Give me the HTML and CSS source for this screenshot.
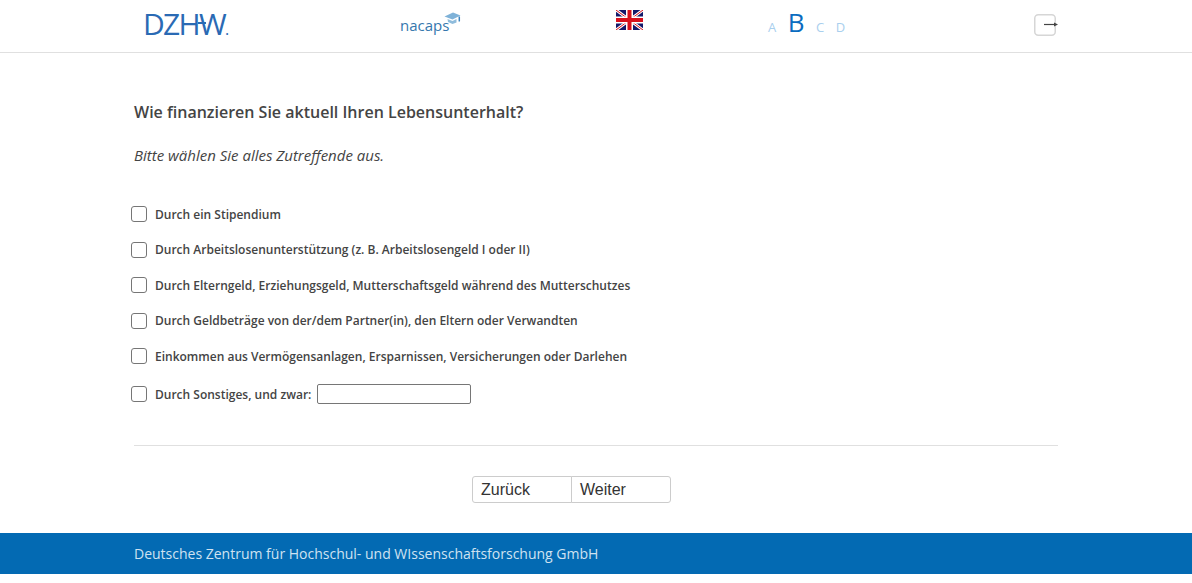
FILE: index.html
```html
<!DOCTYPE html>
<html lang="de">
<head>
    <meta charset="UTF-8">
    <meta name="viewport" content="width=device-width, initial-scale=1.0">
    <title>Wie finanzieren Sie aktuell Ihren Lebensunterhalt?</title>
    <link rel="stylesheet" href="styles.css">
</head>
<body>
    <header class="top-bar">
        <div class="top-inner">
            <div class="logo-dzhw">DZH<span class="logo-w">W</span><span class="logo-dot">.</span></div>
            <div class="logo-nacaps">
                <span>nacaps</span>
                <svg class="cap-icon" width="17" height="14" viewBox="0 0 17 14">
                    <path d="M0.500 4.500 9 0.500 16.500 3.500 8.500 7.500z" fill="#7fb2d8"/>
                    <path d="M3.500 7 8.500 9 12.500 7V10.500L8.500 12 4 10z" fill="#8fbcdc"/>
                    <path d="M15.300 4.500V9.500" stroke="#3f86c0" stroke-width="1.500"/>
                </svg>
            </div>
            <div class="flag-cell">
                <svg width="27" height="20" viewBox="0 0 27 20">
                    <rect width="27" height="20" fill="#14186a"/>
                    <path d="M0 0 27 20M27 0 0 20" stroke="#fff" stroke-width="3"/>
                    <path d="M0 0 27 20M27 0 0 20" stroke="#d8101c" stroke-width="1"/>
                    <path d="M13.500 0V20M0 10H27" stroke="#fff" stroke-width="7"/>
                    <path d="M13.500 0V20M0 10H27" stroke="#d8101c" stroke-width="4"/>
                </svg>
            </div>
            <div class="font-size-switch">
                <span>A</span>
                <span class="active">B</span>
                <span>C</span>
                <span>D</span>
            </div>
            <div class="logout-cell">
                <button class="logout" type="button" aria-label="Abmelden">
                    <svg width="22" height="22" viewBox="0 0 22 22">
                        <rect x="0.750" y="0.750" width="20.500" height="20.500" rx="3.500" fill="#fff" stroke="#d6d6d6" stroke-width="1.500"/>
                        <path d="M10 10.500H21" stroke="#444" stroke-width="1.200"/>
                        <path d="M20 8.500 24 10.500 20 12.500z" fill="#444"/>
                    </svg>
                </button>
            </div>
        </div>
    </header>

    <main class="content">
        <h1>Wie finanzieren Sie aktuell Ihren Lebensunterhalt?</h1>
        <p class="hint">Bitte wählen Sie alles Zutreffende aus.</p>

        <div class="options">
            <label class="option"><input type="checkbox"><span>Durch ein Stipendium</span></label>
            <label class="option"><input type="checkbox"><span>Durch Arbeitslosenunterstützung (z. B. Arbeitslosengeld I oder II)</span></label>
            <label class="option"><input type="checkbox"><span>Durch Elterngeld, Erziehungsgeld, Mutterschaftsgeld während des Mutterschutzes</span></label>
            <label class="option"><input type="checkbox"><span>Durch Geldbeträge von der/dem Partner(in), den Eltern oder Verwandten</span></label>
            <label class="option"><input type="checkbox"><span>Einkommen aus Vermögensanlagen, Ersparnissen, Versicherungen oder Darlehen</span></label>
            <label class="option option-other"><input type="checkbox"><span>Durch Sonstiges, und zwar:</span><input class="other-text" type="text"></label>
        </div>

        <hr class="divider">

        <div class="nav-buttons">
            <button type="button">Zurück</button>
            <button type="button">Weiter</button>
        </div>
    </main>

    <footer class="footer">
        <div class="footer-inner">Deutsches Zentrum für Hochschul- und WIssenschaftsforschung GmbH</div>
    </footer>
</body>
</html>
```

FILE: styles.css
```css
body {
    margin: 0;
    font-family: "Open Sans", Arial, sans-serif;
    color: #444;
    background-color: white;
}
.top-bar {
    height: 52px;
    border-bottom: 1px solid #e0e0e0;
}
.top-inner {
    width: 924px;
    margin: 0 auto;
    display: grid;
    grid-template-columns: 266px 216px 152px 266px 24px;
    height: 52px;
}
.logo-dzhw {
    padding: 8px 0 0 9px;
    font-size: 30px;
    line-height: 32px;
    font-weight: 400;
    letter-spacing: -1.7px;
    color: #2a6ab4;
}
.logo-w {
    position: relative;
}
.logo-w::before {
    content: "";
    position: absolute;
    left: -1px;
    top: 19px;
    width: 8px;
    height: 2px;
    background-color: #2a6ab4;
}
.logo-dot {
    font-size: 16px;
}
.logo-nacaps {
    display: flex;
    align-items: flex-start;
    padding-top: 15px;
    font-size: 15px;
    line-height: 20px;
    color: #3577ad;
}
.cap-icon {
    margin: -3px 0 0 -5px;
}
.flag-cell {
    padding-top: 10px;
}
.flag-cell svg {
    display: block;
}
.font-size-switch {
    display: flex;
    align-items: baseline;
    gap: 11.5px;
    height: 34px;
    padding-top: 6px;
    font-size: 13px;
    color: #a9cfee;
}
.font-size-switch .active {
    font-size: 26px;
    line-height: 32px;
    font-weight: 500;
    color: #0a6cc0;
}
.logout-cell {
    padding-top: 14px;
}
.logout {
    display: block;
    padding: 0;
    border: none;
    background: none;
}
.logout svg {
    display: block;
    overflow: visible;
}
.content {
    width: 924px;
    margin: 0 auto;
}
h1 {
    margin: 0;
    padding-top: 48px;
    font-size: 16px;
    line-height: 22px;
    font-weight: 600;
}
.hint {
    margin: 21px 0 0;
    font-size: 15px;
    line-height: 22px;
    font-style: italic;
}
.options {
    display: flex;
    flex-direction: column;
    margin-top: 30.7px;
}
.option {
    display: flex;
    align-items: center;
    gap: 8px;
    height: 35.5px;
    margin-left: -3px;
    font-size: 12px;
    font-weight: 600;
}
.option input[type="checkbox"] {
    appearance: none;
    flex: none;
    width: 16px;
    height: 16px;
    margin: 0;
    background: white;
    border: 1px solid #767676;
    border-radius: 3px;
}
.option-other {
    height: 40.3px;
}
.other-text {
    width: 154px;
    height: 20px;
    box-sizing: border-box;
    margin: 0 0 1px -2px;
    border: 1px solid #767676;
    border-radius: 2px;
    background: white;
}
.divider {
    margin: 31px 0 0;
    border: none;
    border-top: 1px solid #e0e0e0;
}
.nav-buttons {
    display: flex;
    justify-content: center;
    margin-top: 30px;
    padding-right: 49px;
}
.nav-buttons button {
    width: 100px;
    height: 27px;
    padding: 1px 0 0 8px;
    text-align: left;
    font-family: "Liberation Sans", Arial, sans-serif;
    font-size: 16px;
    color: #333;
    background: white;
    border: 1px solid #ccc;
}
.nav-buttons button:first-child {
    border-radius: 3px 0 0 3px;
}
.nav-buttons button:last-child {
    margin-left: -1px;
    border-radius: 0 3px 3px 0;
}
.footer {
    margin-top: 30px;
    height: 41px;
    background-color: #036ab3;
}
.footer-inner {
    width: 924px;
    margin: 0 auto;
    font-size: 14px;
    line-height: 41px;
    color: #cfe2f1;
}
```
